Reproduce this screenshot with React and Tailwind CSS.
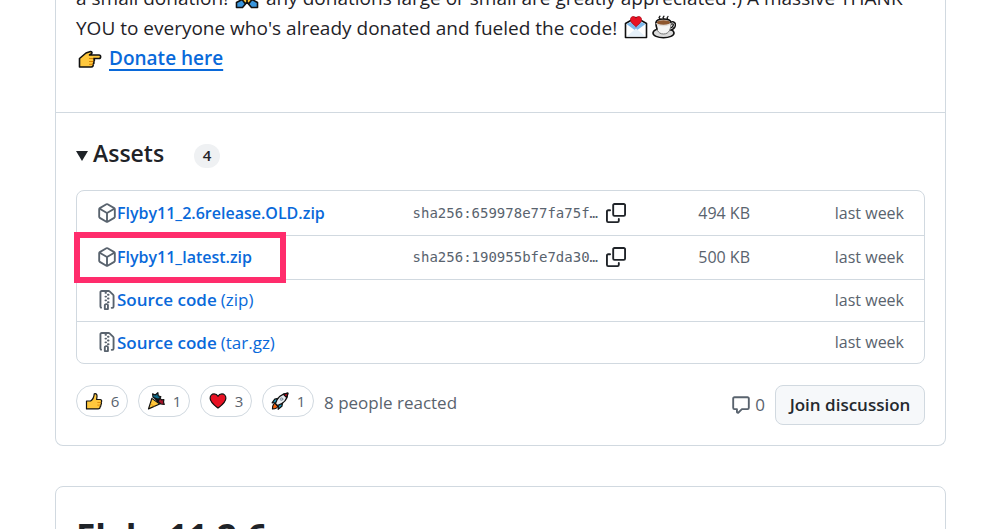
const assets = [
  { name: "Flyby11_2.6release.OLD.zip", kind: "package", sha: "sha256:659978e77fa75f…", size: "494 KB" },
  { name: "Flyby11_latest.zip", kind: "package", sha: "sha256:190955bfe7da30…", size: "500 KB", marked: true },
  { name: "Source code", ext: "(zip)", kind: "zip" },
  { name: "Source code", ext: "(tar.gz)", kind: "zip" },
];

const iconPaths = {
  package:
    "m8.878.392 5.25 3.045c.54.314.872.89.872 1.514v6.098a1.75 1.75 0 0 1-.872 1.514l-5.25 3.045a1.75 1.75 0 0 1-1.756 0l-5.25-3.045A1.75 1.75 0 0 1 1 11.049V4.951c0-.624.332-1.201.872-1.514L7.122.392a1.75 1.75 0 0 1 1.756 0ZM7.875 1.69l-4.63 2.685L8 7.133l4.755-2.758-4.63-2.685a.248.248 0 0 0-.25 0ZM2.5 5.677v5.372c0 .09.047.171.125.216l4.625 2.683V8.432Zm6.25 8.271 4.625-2.683a.25.25 0 0 0 .125-.216V5.677L8.75 8.432Z",
  zip:
    "M3.5 1.75v11.5c0 .09.048.173.126.217a.75.75 0 0 1-.752 1.298A1.748 1.748 0 0 1 2 13.25V1.75C2 .784 2.784 0 3.75 0h5.586c.464 0 .909.185 1.237.513l2.914 2.914c.329.328.513.773.513 1.237v8.586A1.75 1.75 0 0 1 12.25 15h-.5a.75.75 0 0 1 0-1.5h.5a.25.25 0 0 0 .25-.25V4.664a.25.25 0 0 0-.073-.177L9.513 1.573a.25.25 0 0 0-.177-.073H7.25a.75.75 0 0 1 0 1.5h-.5a.75.75 0 0 1 0-1.5h-3a.25.25 0 0 0-.25.25Zm3.75 8.75h.5c.966 0 1.75.784 1.75 1.75v3a.75.75 0 0 1-.75.75h-2.5a.75.75 0 0 1-.75-.75v-3c0-.966.784-1.75 1.75-1.75ZM6 5.25a.75.75 0 0 1 .75-.75h.5a.75.75 0 0 1 0 1.5h-.5A.75.75 0 0 1 6 5.25Zm.75 2.25h.5a.75.75 0 0 1 0 1.5h-.5a.75.75 0 0 1 0-1.5Zm1.25-.75A.75.75 0 0 1 8.75 6h.5a.75.75 0 0 1 0 1.5h-.5A.75.75 0 0 1 8 6.75ZM8.75 3h.5a.75.75 0 0 1 0 1.5h-.5a.75.75 0 0 1 0-1.5ZM8 9.75A.75.75 0 0 1 8.75 9h.5a.75.75 0 0 1 0 1.5h-.5A.75.75 0 0 1 8 9.75Zm-1 2.5v2.25h1v-2.25a.25.25 0 0 0-.25-.25h-.5a.25.25 0 0 0-.25.25Z",
  copy:
    "M0 6.75C0 5.784.784 5 1.75 5h1.5a.75.75 0 0 1 0 1.5h-1.5a.25.25 0 0 0-.25.25v7.5c0 .138.112.25.25.25h7.5a.25.25 0 0 0 .25-.25v-1.5a.75.75 0 0 1 1.5 0v1.5A1.75 1.75 0 0 1 9.25 16h-7.5A1.75 1.75 0 0 1 0 14.25ZM5 1.75C5 .784 5.784 0 6.75 0h7.5C15.216 0 16 .784 16 1.75v7.5A1.75 1.75 0 0 1 14.25 11h-7.5A1.75 1.75 0 0 1 5 9.25Zm1.75-.25a.25.25 0 0 0-.25.25v7.5c0 .138.112.25.25.25h7.5a.25.25 0 0 0 .25-.25v-7.5a.25.25 0 0 0-.25-.25Z",
  comment:
    "M1 2.75C1 1.784 1.784 1 2.75 1h10.5c.966 0 1.75.784 1.75 1.75v7.5A1.75 1.75 0 0 1 13.25 12H9.06l-2.573 2.573A1.458 1.458 0 0 1 4 13.543V12H2.75A1.75 1.75 0 0 1 1 10.25Zm1.75-.25a.25.25 0 0 0-.25.25v7.5c0 .138.112.25.25.25h2a.75.75 0 0 1 .75.75v2.19l2.72-2.72a.749.749 0 0 1 .53-.22h4.5a.25.25 0 0 0 .25-.25v-7.5a.25.25 0 0 0-.25-.25Z",
};

function Icon({ name, className }) {
  return (
    <svg viewBox="0 0 16 16" fill="currentColor" className={className} aria-hidden="true">
      <path d={iconPaths[name]} />
    </svg>
  );
}

// Emoji are drawn on a 24 unit grid with a thick black outline
function Emoji({ label, className, children }) {
  return (
    <svg
      viewBox="0 0 24 24"
      role="img"
      aria-label={label}
      className={className}
      stroke="#111"
      strokeWidth="1.6"
      strokeLinejoin="round"
      strokeLinecap="round"
    >
      {children}
    </svg>
  );
}

const thumb = (
  <>
    <path fill="#ffc83d" d="M2 12h5.500c3-2 4.500-5 4.800-9.500 2.800-.8 4 1 3.700 3.500L15.500 10H20c2 0 2.700 1.500 2 3l-.4 1c.6 1 .5 2-.4 3 .2 1.200-.2 2-1 2.700 0 1.800-1 2.800-2.800 2.800H2z" />
    <path fill="none" stroke="#d67d00" strokeWidth="1" d="M17 14h3.500M17 17.500h3" />
  </>
);

const popper = (
  <>
    <path fill="#ffc83d" d="M6.500 8.500 2 22.500l15-6.500z" />
    <path stroke="#e58a00" strokeWidth="1" d="m5.500 16 4 3" />
    <path fill="#0f6c8c" d="M7.500 2.500 11 4l3.500-3 .5 4 3.500 1.500L14 11l-3-2.500-3-1.500z" />
    <path fill="#a5142a" d="m14.500 12.500 3-4 2 2 3-.5-.5 3.500 1 3-4.500-.5z" />
    <path fill="#5b1a2c" d="m10.500 8.500 4 1 .5 4z" />
  </>
);

const heart = (
  <path fill="#e81224" d="M12 21.500C7 17.500 1.500 13.500 1.500 8.200 1.500 5 3.800 2.500 6.800 2.500c2.200 0 4.200 1.300 5.200 3.300 1-2 3-3.300 5.200-3.300 3 0 5.300 2.500 5.300 5.700 0 5.300-5.500 9.300-10.500 13.300z" />
);

const rocket = (
  <>
    <path fill="#f7630c" d="M5.500 15c-3 1-3.500 4-3.500 7.500 3.500 0 6.500-.5 7-3.500z" />
    <path fill="#1a9fc4" d="M9.500 8.500 5 9.500l-3.500 5 5-.5zM15.500 14.500l-1 4.500-5 4 .5-5.500z" />
    <path fill="#e9eef2" d="M6 15.500C8 8.500 13.500 2.500 22.500 1.500c-.6 9-7 14.500-14 16.500z" />
    <path fill="#c50f1f" d="M16.500 3.200c2-.9 4-1.500 6-1.700-.2 2.100-.8 4-1.700 5.800z" />
    <circle cx="14" cy="9.500" r="1.800" fill="#b8c4ce" stroke="#7a8794" strokeWidth="1" />
  </>
);

const reactions = [
  { label: "thumbs up", art: thumb, count: 6 },
  { label: "party popper", art: popper, count: 1 },
  { label: "red heart", art: heart, count: 3 },
  { label: "rocket", art: rocket, count: 1 },
];

function ReleaseNotes() {
  return (
    <div className="-mt-[17px] px-5 pb-[39px] text-[19px] leading-[30px]">
      <p>
        a small donation!{" "}
        <Emoji label="folded hands" className="mx-0.5 inline size-6 align-[-4px]">
          <path fill="#ffc83d" d="M12 2.500 8 8 6.500 14.500 8 20l4-2.500 4 2.500 1.500-5.500L16 8z" />
          <path d="M12 3v14.500" />
          <path fill="#3a96dd" d="M1.500 17.500 7 14.500l3.500 4.500-3 3.500h-6zM22.500 17.500 17 14.500 13.500 19l3 3.500h6z" />
        </Emoji>{" "}
        any donations large or small are greatly appreciated :) A massive THANK YOU to everyone who's
        already donated and fueled the code!{" "}
        <Emoji label="love letter" className="mx-0.5 inline size-6 align-[-4px]">
          <path fill="#fff" d="M1.500 8.500 12 2.500l10.500 6v14h-21z" />
          <path fill="#7cb9ec" stroke="none" d="m2.500 9 4.500-2h10l4.500 2L12 16z" />
          <path fill="#e6f1fa" stroke="none" d="m2.500 21.500 9.500-8 9.500 8z" />
          <path fill="#e81224" stroke="#b00c1c" strokeWidth=".8" d="M12 11.500c-3-2.300-5.500-4.200-5.500-7C6.500 2.700 7.700 1.500 9.200 1.500c1.200 0 2.200.7 2.800 1.700.6-1 1.600-1.700 2.800-1.700 1.500 0 2.700 1.200 2.700 3 0 2.800-2.500 4.700-5.500 7z" />
        </Emoji>
        <Emoji label="hot beverage" className="mx-0.5 inline size-6 align-[-4px]">
          <ellipse cx="11.500" cy="18" rx="10.500" ry="4.800" fill="#dcdcdc" />
          <path fill="none" strokeWidth="3.400" d="M19 8c5.500-1.500 4 6-1.500 6" />
          <path fill="none" stroke="#e6e6e6" strokeWidth="1" d="M19 8c5.500-1.500 4 6-1.500 6" />
          <path fill="#f5f5f5" stroke="#777" strokeWidth="1" d="M4 7.500c0 6 1.500 11.500 7.500 11.500S19 13.500 19 7.500z" />
          <path fill="none" d="M4 7.500c0 2.500.3 4.500 1 6.500" />
          <ellipse cx="11.500" cy="7.500" rx="7.500" ry="3" fill="#8e562e" stroke="#e0dcd8" strokeWidth="1.300" />
          <path fill="none" d="M4 7.500C4.500 4.500 8 4 11.500 4S18.500 4.500 19 7.500" />
          <path strokeWidth="1.200" d="M8 4 7 2.700l1-1.500M12 4l-1-1.300 1-1.500M16 4.500l-1-1.500 1-1.500" fill="none" />
        </Emoji>
      </p>
      <p>
        <Emoji label="pointing right" className="mr-[7px] ml-0.5 inline size-6 align-[-7px]">
          <path fill="#ffc83d" d="M1.500 10.500 8 5l4.500-1.500c1.500 0 2 1.300 1 2.200L11.500 7H21c2.200 0 2.200 3.500 0 3.500h-5.500c1.500 1 1 2.500 0 3 .8 1 .5 2.300-.5 2.700.5 1.300 0 2.800-1.800 2.800H1.500z" />
          <path stroke="#d67d00" strokeWidth="1" fill="none" d="M11.500 10.500H15M11.500 13.500H15M11.500 16.300h3" />
        </Emoji>
        <a
          href="#donate"
          className="font-semibold text-[#0969da] underline decoration-2 underline-offset-4"
        >
          Donate here
        </a>
      </p>
    </div>
  );
}

function AssetTable() {
  return (
    <div className="rounded-lg border border-[#d1d9e0]">
      <table className="w-full text-base text-[#59636e]">
        <tbody>
          {assets.map((asset, i) => (
            <tr key={i} className="border-b border-[#d1d9e0] last:border-b-0">
              <td className={asset.sha ? "relative h-11 pl-5" : "h-[42px] pl-5 text-[17px]"}>
                <a href="#download" className="flex items-center whitespace-nowrap text-[#0969da]">
                  <Icon name={asset.kind} className="size-5 text-[#59636e]" />
                  <span className="font-semibold">{asset.name}</span>
                  {asset.ext && <span className="ml-1">{asset.ext}</span>}
                </a>
                {asset.marked && (
                  <div className="pointer-events-none absolute -inset-y-1 -left-[3px] w-[212px] border-[6px] border-[#ff2c6c]" />
                )}
              </td>
              <td className="w-[213px]">
                {asset.sha && (
                  <div className="flex items-center gap-2">
                    <code className="font-['DejaVu_Sans_Mono',monospace] text-sm">{asset.sha}</code>
                    <button type="button" aria-label="Copy digest" className="text-[#1f2328]">
                      <Icon name="copy" className="size-5" />
                    </button>
                  </div>
                )}
              </td>
              <td className="w-[124px] text-right">{asset.size}</td>
              <td className="w-[174px] pr-5 text-right">last week</td>
            </tr>
          ))}
        </tbody>
      </table>
    </div>
  );
}

function Reactions() {
  return (
    <div className="mt-[21px] flex items-start justify-between text-[#59636e]">
      <div className="flex gap-[10px]">
        {reactions.map((r) => (
          <button
            key={r.label}
            type="button"
            className="flex h-8 w-[52px] items-center justify-center gap-2 rounded-full border border-[#d1d9e0] text-[15px]"
          >
            <Emoji label={r.label} className="size-[18px]">
              {r.art}
            </Emoji>
            {r.count}
          </button>
        ))}
        <span className="pt-1.5 text-[17px] leading-6">8 people reacted</span>
      </div>
      <div className="flex items-center gap-[10px] text-[17px]">
        <a href="#comments" className="flex items-center gap-1">
          <Icon name="comment" className="size-5" />
          0
        </a>
        <button
          type="button"
          className="h-10 w-[150px] rounded-lg border border-[#d1d9e0] bg-[#f6f8fa] font-semibold text-[#25292e]"
        >
          Join discussion
        </button>
      </div>
    </div>
  );
}

function App() {
  return (
    <main className="h-screen overflow-hidden bg-white pl-[55px] pr-14 font-['Open_Sans','Noto_Sans',sans-serif] text-[#1f2328]">
      <section className="rounded-b-lg border border-t-0 border-[#d1d9e0]">
        <ReleaseNotes />
        <details open className="border-t border-[#d1d9e0] px-5 pb-5">
          <summary className="flex h-[77px] list-none items-center pt-2 pb-1">
            <svg viewBox="0 0 12 10" className="mt-1 mr-[5px] w-3" fill="currentColor" aria-hidden="true">
              <path d="M0 0h12L6 10z" />
            </svg>
            <h3 className="text-[23px] font-semibold">Assets</h3>
            <span className="mt-1 ml-[30px] flex h-6 w-[26px] items-center justify-center rounded-full bg-[#eff1f3] text-[15px] font-semibold">
              4
            </span>
          </summary>
          <AssetTable />
          <Reactions />
        </details>
      </section>

      <section className="mt-10 rounded-lg border border-[#d1d9e0] px-5 pt-[27px] pb-5">
        <h2 className="text-[35px] leading-[46px] font-bold">Flyby11 2.6</h2>
      </section>
    </main>
  );
}

export default App;
